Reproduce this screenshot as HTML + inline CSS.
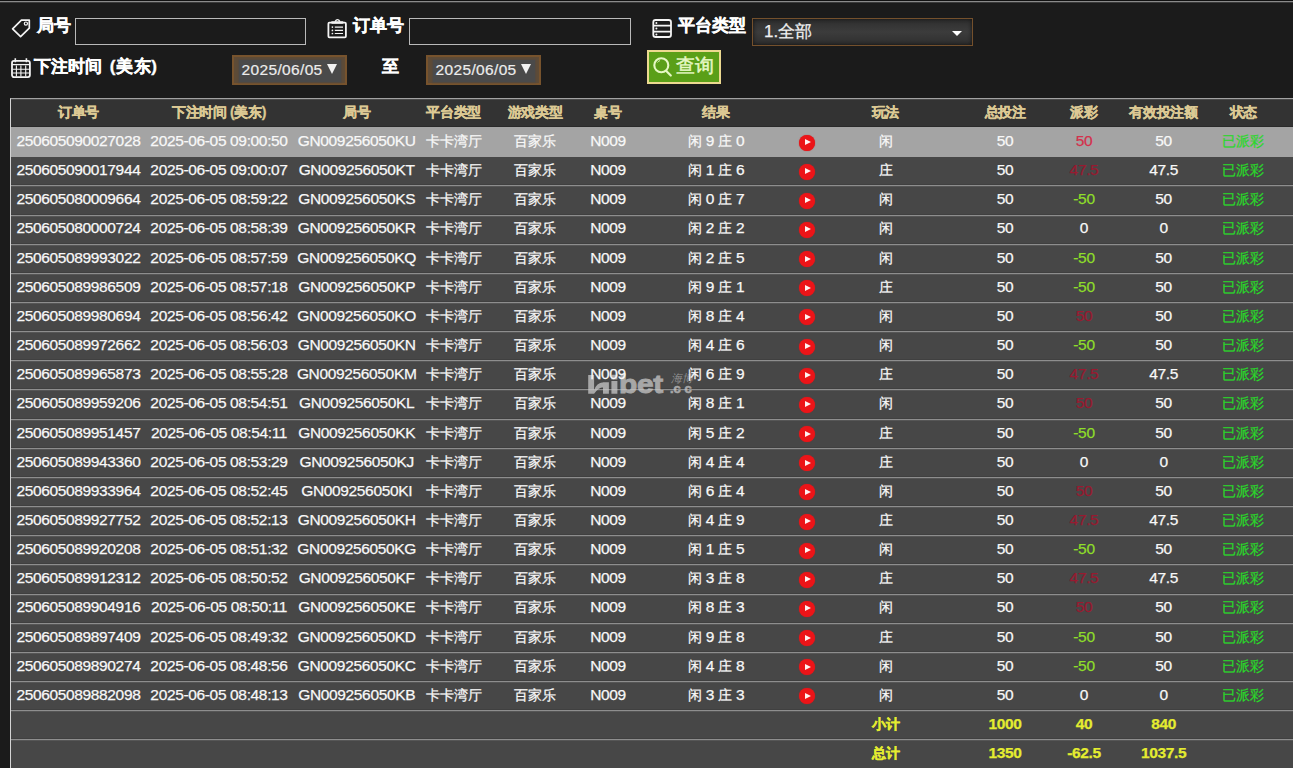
<!DOCTYPE html><html><head><meta charset="utf-8"><title>records</title><style>
*{margin:0;padding:0;box-sizing:border-box}
html,body{width:1293px;height:768px;overflow:hidden;background:#1b1b1b;font-family:"Liberation Sans",sans-serif;color:#fff}
#top{position:absolute;left:0;top:0;width:1293px;height:3px;background:linear-gradient(#111 0,#111 1px,#8a8a8a 1px,#8a8a8a 2px,#3a3a3a 2px)}
.lbl{position:absolute;font-weight:bold;font-size:17px;color:#fff;line-height:20px;white-space:nowrap;-webkit-text-stroke:.35px #fff}
.inp{position:absolute;border:1px solid #b9b9b9;background:#1b1b1b}
.date{position:absolute;border:2px solid #77532d;background:#5e4b37}
.dinner{position:absolute;left:5px;top:2.5px;right:4.5px;bottom:1.5px;background:#4a4a4a;box-shadow:0 0 1.5px 1px #534a40}
.dtxt{position:absolute;left:7.5px;top:2.5px;-webkit-text-stroke:.2px #ececec;font-size:15.5px;letter-spacing:.35px;line-height:20px;color:#ececec;white-space:nowrap}
.dtri{position:absolute;left:93px;top:7px;border-top:10px solid #f2f2f2;border-left:5.4px solid transparent;border-right:5.4px solid transparent}
.sel{position:absolute;border:1px solid #74502c;background:linear-gradient(#2e2e2e,#3c3c3c 50%,#2e2e2e);box-shadow:inset 0 0 4px #111;color:#f0f0f0;font-size:17px;white-space:nowrap}
.btn{position:absolute;border:2px solid #ecd990;background:#5a9f18}
svg{position:absolute;overflow:visible}
#tbl{position:absolute;left:10px;top:98px;width:1300px;height:680px;background:#474747;border-left:1px solid #d4d4d4;border-top:1px solid #a2a2a2}
#hdr{position:absolute;left:11px;top:99px;width:1290px;height:28px;background:#333;border-top:1px solid #4a4a4a;border-bottom:1px solid #2a2a2a}
.row{position:absolute;left:11px;width:1290px}
.sep{position:absolute;left:11px;width:1290px;height:3px;background:linear-gradient(#404040 0,#404040 1px,#8e8e8e 1px,#8e8e8e 2px,#565656 2px)}
.c{position:absolute;width:200px;text-align:center;white-space:nowrap;font-size:15.5px;letter-spacing:-0.35px;line-height:18px;color:#f8f8f8;-webkit-text-stroke:.25px currentColor}
.c i{font-style:normal;font-size:14.2px;letter-spacing:0}
.h{font-weight:bold;color:#dcc994;font-size:14px;-webkit-text-stroke:.3px currentColor}
.r{color:#d4304c}
.dr{color:#981a30}
.g{color:#8ede2a}
.st{color:#2ad82a}
.y{color:#e4ec30;font-weight:bold}
.play{position:absolute;width:16px;height:16px;border-radius:50%;background:#ec1418;box-shadow:0 0 1px #c02020}
.play:after{content:"";position:absolute;left:5.5px;top:4.6px;border-left:6px solid #fff2f2;border-top:3.7px solid transparent;border-bottom:3.7px solid transparent}
</style></head><body>
<div id="top"></div>
<svg style="left:6px;top:14px" width="32" height="28" viewBox="0 0 32 28"><path d="M6.6 14.9 L15.4 6.2 L23.3 6.2 L23.3 14.2 L14.6 22.6 Z" fill="none" stroke="#f4f4f4" stroke-width="1.7" stroke-linejoin="round"/><circle cx="19.9" cy="9.6" r="1.6" fill="none" stroke="#f4f4f4" stroke-width="1.2"/></svg>
<div class="lbl" style="left:36.5px;top:16.2px">局号</div>
<div class="inp" style="left:75px;top:18px;width:231px;height:27px"></div>
<svg style="left:320px;top:14px" width="32" height="28" viewBox="0 0 32 28"><rect x="8.4" y="8.7" width="17.5" height="14.6" rx="1" fill="none" stroke="#f4f4f4" stroke-width="1.8"/><rect x="11" y="7.3" width="12.6" height="2.4" rx="1.1" fill="#f4f4f4"/><path d="M15 7.6 Q17.5 3.6 20 7.6" fill="none" stroke="#f4f4f4" stroke-width="1.4"/><circle cx="12.4" cy="13.1" r=".85" fill="#f4f4f4"/><circle cx="12.4" cy="16.4" r=".85" fill="#f4f4f4"/><circle cx="12.4" cy="19.5" r=".85" fill="#f4f4f4"/><path d="M14.8 13.1H23M14.8 16.4H23M14.8 19.5H23" stroke="#f4f4f4" stroke-width="1.1"/></svg>
<div class="lbl" style="left:352.5px;top:16.2px">订单号</div>
<div class="inp" style="left:409px;top:18px;width:222px;height:27px"></div>
<svg style="left:646px;top:14px" width="32" height="28" viewBox="0 0 32 28"><rect x="7.3" y="6" width="17.7" height="17" rx="2.3" fill="none" stroke="#f4f4f4" stroke-width="1.8"/><path d="M7.3 11.7H25M7.3 17.7H25" stroke="#f4f4f4" stroke-width="1.7"/><circle cx="10.4" cy="8.9" r="1" fill="#f4f4f4"/><circle cx="10.4" cy="14.6" r="1" fill="#f4f4f4"/><circle cx="10.4" cy="20.4" r="1" fill="#f4f4f4"/></svg>
<div class="lbl" style="left:677.5px;top:16.2px">平台类型</div>
<div class="sel" style="left:752px;top:18px;width:221px;height:28px"><span style="position:absolute;left:11px;top:0.5px;-webkit-text-stroke:.25px #f4f4f4">1.全部</span><span style="position:absolute;left:199px;top:12px;border-top:5px solid #fff;border-left:5px solid transparent;border-right:5px solid transparent"></span></div>
<svg style="left:6px;top:54px" width="32" height="28" viewBox="0 0 32 28"><rect x="6" y="6.9" width="17.9" height="16.2" rx="2" fill="none" stroke="#f4f4f4" stroke-width="1.8"/><path d="M9.3 4.3v4M20.4 4.3v4" stroke="#f4f4f4" stroke-width="1.6"/><path d="M6 10.6H23.9" stroke="#f4f4f4" stroke-width="1.3"/><path d="M10.4 11.5V22.4M14.9 11.5V22.4M19.7 11.5V22.4M6.8 15.3H23M6.8 19H23" stroke="#f4f4f4" stroke-width="1.1"/></svg>
<div class="lbl" style="left:34px;top:57px;word-spacing:3px">下注时间 <span style="letter-spacing:.6px">(美东)</span></div>
<div class="date" style="left:232px;top:55px;width:115px;height:30px"><div class="dinner"></div><span class="dtxt">2025/06/05</span><span class="dtri"></span></div>
<div class="lbl" style="left:382px;top:56.5px">至</div>
<div class="date" style="left:426px;top:55px;width:115px;height:30px"><div class="dinner"></div><span class="dtxt">2025/06/05</span><span class="dtri"></span></div>
<div class="btn" style="left:647px;top:50px;width:74px;height:34px"></div><svg style="left:640px;top:46px" width="86" height="42" viewBox="0 0 86 42"><circle cx="21.3" cy="19.3" r="7" fill="none" stroke="#e6f8c4" stroke-width="2.1"/><path d="M26.3 25L30.8 29.5" stroke="#e6f8c4" stroke-width="2.2" stroke-linecap="round"/><path d="M17.5 16.5Q18.5 15 20 14.6" fill="none" stroke="#e6f8c4" stroke-width=".9"/></svg><div style="position:absolute;left:675.5px;top:54px;font-size:19px;line-height:24px;color:#e6f8c4;white-space:nowrap;-webkit-text-stroke:.5px #e6f8c4">查询</div>
<div id="tbl"></div><div id="hdr"></div>
<div class="c h" style="left:-21.6px;top:103px">订单号</div>
<div class="c h" style="left:119.0px;top:103px">下注时间 (美东)</div>
<div class="c h" style="left:256.7px;top:103px">局号</div>
<div class="c h" style="left:353.7px;top:103px">平台类型</div>
<div class="c h" style="left:435.0px;top:103px">游戏类型</div>
<div class="c h" style="left:508.0px;top:103px">桌号</div>
<div class="c h" style="left:616.0px;top:103px">结果</div>
<div class="c h" style="left:785.5px;top:103px">玩法</div>
<div class="c h" style="left:905.0px;top:103px">总投注</div>
<div class="c h" style="left:984.0px;top:103px">派彩</div>
<div class="c h" style="left:1063.6px;top:103px">有效投注额</div>
<div class="c h" style="left:1143.3px;top:103px">状态</div>
<div class="row" style="top:127.0px;height:30px;background:#a4a4a4"></div>
<div class="sep" style="top:184px"></div>
<div class="sep" style="top:214px"></div>
<div class="sep" style="top:243px"></div>
<div class="sep" style="top:272px"></div>
<div class="sep" style="top:301px"></div>
<div class="sep" style="top:330px"></div>
<div class="sep" style="top:359px"></div>
<div class="sep" style="top:388px"></div>
<div class="sep" style="top:418px"></div>
<div class="sep" style="top:447px"></div>
<div class="sep" style="top:476px"></div>
<div class="sep" style="top:505px"></div>
<div class="sep" style="top:534px"></div>
<div class="sep" style="top:563px"></div>
<div class="sep" style="top:593px"></div>
<div class="sep" style="top:622px"></div>
<div class="sep" style="top:651px"></div>
<div class="sep" style="top:680px"></div>
<div class="sep" style="top:709px"></div>
<div class="sep" style="top:738px"></div>
<div style="position:absolute;left:0;top:0;width:1293px;height:768px;opacity:.74">
<svg style="left:0;top:0" width="1293" height="768" viewBox="0 0 1293 768"><path fill="#c9c9c9" d="M588.2 375.1h5.9v18.6h-5.9z M603 382.3h5.9v11.4H603z M611.4 381h6v12.7h-6z M611.4 374.8h6v4.6h-6z M594 390.5 Q596.5 382.6 603.2 382.3 L603.2 387.3 Q598.5 387.6 594.1 393.7 Z"/></svg>
<div style="position:absolute;left:618.6px;top:368.6px;font-weight:bold;font-size:25.8px;line-height:30px;color:#c9c9c9;-webkit-text-stroke:.9px #c9c9c9;transform:scaleX(1.16);transform-origin:0 0;white-space:nowrap;letter-spacing:-.3px">bet</div>
<div style="position:absolute;left:670px;top:381px;font-weight:bold;font-size:13px;line-height:16px;color:#c9c9c9;-webkit-text-stroke:.6px #c9c9c9;letter-spacing:0px;white-space:nowrap">.c c</div>
<div style="position:absolute;left:671px;top:371px;font-size:11px;line-height:14px;color:#aaa;font-style:italic;white-space:nowrap">海博</div>
</div>
<div class="c " style="left:-21.6px;top:132.0px">250605090027028</div>
<div class="c " style="left:119.0px;top:132.0px">2025-06-05 09:00:50</div>
<div class="c " style="left:256.7px;top:132.0px">GN009256050KU</div>
<div class="c " style="left:353.7px;top:132.0px"><i>卡卡湾厅</i></div>
<div class="c " style="left:435.0px;top:132.0px"><i>百家乐</i></div>
<div class="c " style="left:508.0px;top:132.0px">N009</div>
<div class="c " style="left:616.0px;top:132.0px"><i>闲</i> 9 <i>庄</i> 0</div>
<div class="c " style="left:785.5px;top:132.0px"><i>闲</i></div>
<div class="c " style="left:905.0px;top:132.0px">50</div>
<div class="c r" style="left:984.0px;top:132.0px">50</div>
<div class="c " style="left:1063.6px;top:132.0px">50</div>
<div class="c st" style="left:1143.3px;top:132.0px"><i>已派彩</i></div>
<div class="play" style="left:799px;top:134.5px"></div>
<div class="c " style="left:-21.6px;top:161.2px">250605090017944</div>
<div class="c " style="left:119.0px;top:161.2px">2025-06-05 09:00:07</div>
<div class="c " style="left:256.7px;top:161.2px">GN009256050KT</div>
<div class="c " style="left:353.7px;top:161.2px"><i>卡卡湾厅</i></div>
<div class="c " style="left:435.0px;top:161.2px"><i>百家乐</i></div>
<div class="c " style="left:508.0px;top:161.2px">N009</div>
<div class="c " style="left:616.0px;top:161.2px"><i>闲</i> 1 <i>庄</i> 6</div>
<div class="c " style="left:785.5px;top:161.2px"><i>庄</i></div>
<div class="c " style="left:905.0px;top:161.2px">50</div>
<div class="c dr" style="left:984.0px;top:161.2px">47.5</div>
<div class="c " style="left:1063.6px;top:161.2px">47.5</div>
<div class="c st" style="left:1143.3px;top:161.2px"><i>已派彩</i></div>
<div class="play" style="left:799px;top:163.7px"></div>
<div class="c " style="left:-21.6px;top:190.3px">250605080009664</div>
<div class="c " style="left:119.0px;top:190.3px">2025-06-05 08:59:22</div>
<div class="c " style="left:256.7px;top:190.3px">GN009256050KS</div>
<div class="c " style="left:353.7px;top:190.3px"><i>卡卡湾厅</i></div>
<div class="c " style="left:435.0px;top:190.3px"><i>百家乐</i></div>
<div class="c " style="left:508.0px;top:190.3px">N009</div>
<div class="c " style="left:616.0px;top:190.3px"><i>闲</i> 0 <i>庄</i> 7</div>
<div class="c " style="left:785.5px;top:190.3px"><i>闲</i></div>
<div class="c " style="left:905.0px;top:190.3px">50</div>
<div class="c g" style="left:984.0px;top:190.3px">-50</div>
<div class="c " style="left:1063.6px;top:190.3px">50</div>
<div class="c st" style="left:1143.3px;top:190.3px"><i>已派彩</i></div>
<div class="play" style="left:799px;top:192.8px"></div>
<div class="c " style="left:-21.6px;top:219.4px">250605080000724</div>
<div class="c " style="left:119.0px;top:219.4px">2025-06-05 08:58:39</div>
<div class="c " style="left:256.7px;top:219.4px">GN009256050KR</div>
<div class="c " style="left:353.7px;top:219.4px"><i>卡卡湾厅</i></div>
<div class="c " style="left:435.0px;top:219.4px"><i>百家乐</i></div>
<div class="c " style="left:508.0px;top:219.4px">N009</div>
<div class="c " style="left:616.0px;top:219.4px"><i>闲</i> 2 <i>庄</i> 2</div>
<div class="c " style="left:785.5px;top:219.4px"><i>闲</i></div>
<div class="c " style="left:905.0px;top:219.4px">50</div>
<div class="c " style="left:984.0px;top:219.4px">0</div>
<div class="c " style="left:1063.6px;top:219.4px">0</div>
<div class="c st" style="left:1143.3px;top:219.4px"><i>已派彩</i></div>
<div class="play" style="left:799px;top:221.9px"></div>
<div class="c " style="left:-21.6px;top:248.6px">250605089993022</div>
<div class="c " style="left:119.0px;top:248.6px">2025-06-05 08:57:59</div>
<div class="c " style="left:256.7px;top:248.6px">GN009256050KQ</div>
<div class="c " style="left:353.7px;top:248.6px"><i>卡卡湾厅</i></div>
<div class="c " style="left:435.0px;top:248.6px"><i>百家乐</i></div>
<div class="c " style="left:508.0px;top:248.6px">N009</div>
<div class="c " style="left:616.0px;top:248.6px"><i>闲</i> 2 <i>庄</i> 5</div>
<div class="c " style="left:785.5px;top:248.6px"><i>闲</i></div>
<div class="c " style="left:905.0px;top:248.6px">50</div>
<div class="c g" style="left:984.0px;top:248.6px">-50</div>
<div class="c " style="left:1063.6px;top:248.6px">50</div>
<div class="c st" style="left:1143.3px;top:248.6px"><i>已派彩</i></div>
<div class="play" style="left:799px;top:251.1px"></div>
<div class="c " style="left:-21.6px;top:277.8px">250605089986509</div>
<div class="c " style="left:119.0px;top:277.8px">2025-06-05 08:57:18</div>
<div class="c " style="left:256.7px;top:277.8px">GN009256050KP</div>
<div class="c " style="left:353.7px;top:277.8px"><i>卡卡湾厅</i></div>
<div class="c " style="left:435.0px;top:277.8px"><i>百家乐</i></div>
<div class="c " style="left:508.0px;top:277.8px">N009</div>
<div class="c " style="left:616.0px;top:277.8px"><i>闲</i> 9 <i>庄</i> 1</div>
<div class="c " style="left:785.5px;top:277.8px"><i>庄</i></div>
<div class="c " style="left:905.0px;top:277.8px">50</div>
<div class="c g" style="left:984.0px;top:277.8px">-50</div>
<div class="c " style="left:1063.6px;top:277.8px">50</div>
<div class="c st" style="left:1143.3px;top:277.8px"><i>已派彩</i></div>
<div class="play" style="left:799px;top:280.2px"></div>
<div class="c " style="left:-21.6px;top:306.9px">250605089980694</div>
<div class="c " style="left:119.0px;top:306.9px">2025-06-05 08:56:42</div>
<div class="c " style="left:256.7px;top:306.9px">GN009256050KO</div>
<div class="c " style="left:353.7px;top:306.9px"><i>卡卡湾厅</i></div>
<div class="c " style="left:435.0px;top:306.9px"><i>百家乐</i></div>
<div class="c " style="left:508.0px;top:306.9px">N009</div>
<div class="c " style="left:616.0px;top:306.9px"><i>闲</i> 8 <i>庄</i> 4</div>
<div class="c " style="left:785.5px;top:306.9px"><i>闲</i></div>
<div class="c " style="left:905.0px;top:306.9px">50</div>
<div class="c dr" style="left:984.0px;top:306.9px">50</div>
<div class="c " style="left:1063.6px;top:306.9px">50</div>
<div class="c st" style="left:1143.3px;top:306.9px"><i>已派彩</i></div>
<div class="play" style="left:799px;top:309.4px"></div>
<div class="c " style="left:-21.6px;top:336.0px">250605089972662</div>
<div class="c " style="left:119.0px;top:336.0px">2025-06-05 08:56:03</div>
<div class="c " style="left:256.7px;top:336.0px">GN009256050KN</div>
<div class="c " style="left:353.7px;top:336.0px"><i>卡卡湾厅</i></div>
<div class="c " style="left:435.0px;top:336.0px"><i>百家乐</i></div>
<div class="c " style="left:508.0px;top:336.0px">N009</div>
<div class="c " style="left:616.0px;top:336.0px"><i>闲</i> 4 <i>庄</i> 6</div>
<div class="c " style="left:785.5px;top:336.0px"><i>闲</i></div>
<div class="c " style="left:905.0px;top:336.0px">50</div>
<div class="c g" style="left:984.0px;top:336.0px">-50</div>
<div class="c " style="left:1063.6px;top:336.0px">50</div>
<div class="c st" style="left:1143.3px;top:336.0px"><i>已派彩</i></div>
<div class="play" style="left:799px;top:338.5px"></div>
<div class="c " style="left:-21.6px;top:365.2px">250605089965873</div>
<div class="c " style="left:119.0px;top:365.2px">2025-06-05 08:55:28</div>
<div class="c " style="left:256.7px;top:365.2px">GN009256050KM</div>
<div class="c " style="left:353.7px;top:365.2px"><i>卡卡湾厅</i></div>
<div class="c " style="left:435.0px;top:365.2px"><i>百家乐</i></div>
<div class="c " style="left:508.0px;top:365.2px">N009</div>
<div class="c " style="left:616.0px;top:365.2px"><i>闲</i> 6 <i>庄</i> 9</div>
<div class="c " style="left:785.5px;top:365.2px"><i>庄</i></div>
<div class="c " style="left:905.0px;top:365.2px">50</div>
<div class="c dr" style="left:984.0px;top:365.2px">47.5</div>
<div class="c " style="left:1063.6px;top:365.2px">47.5</div>
<div class="c st" style="left:1143.3px;top:365.2px"><i>已派彩</i></div>
<div class="play" style="left:799px;top:367.7px"></div>
<div class="c " style="left:-21.6px;top:394.3px">250605089959206</div>
<div class="c " style="left:119.0px;top:394.3px">2025-06-05 08:54:51</div>
<div class="c " style="left:256.7px;top:394.3px">GN009256050KL</div>
<div class="c " style="left:353.7px;top:394.3px"><i>卡卡湾厅</i></div>
<div class="c " style="left:435.0px;top:394.3px"><i>百家乐</i></div>
<div class="c " style="left:508.0px;top:394.3px">N009</div>
<div class="c " style="left:616.0px;top:394.3px"><i>闲</i> 8 <i>庄</i> 1</div>
<div class="c " style="left:785.5px;top:394.3px"><i>闲</i></div>
<div class="c " style="left:905.0px;top:394.3px">50</div>
<div class="c dr" style="left:984.0px;top:394.3px">50</div>
<div class="c " style="left:1063.6px;top:394.3px">50</div>
<div class="c st" style="left:1143.3px;top:394.3px"><i>已派彩</i></div>
<div class="play" style="left:799px;top:396.8px"></div>
<div class="c " style="left:-21.6px;top:423.5px">250605089951457</div>
<div class="c " style="left:119.0px;top:423.5px">2025-06-05 08:54:11</div>
<div class="c " style="left:256.7px;top:423.5px">GN009256050KK</div>
<div class="c " style="left:353.7px;top:423.5px"><i>卡卡湾厅</i></div>
<div class="c " style="left:435.0px;top:423.5px"><i>百家乐</i></div>
<div class="c " style="left:508.0px;top:423.5px">N009</div>
<div class="c " style="left:616.0px;top:423.5px"><i>闲</i> 5 <i>庄</i> 2</div>
<div class="c " style="left:785.5px;top:423.5px"><i>庄</i></div>
<div class="c " style="left:905.0px;top:423.5px">50</div>
<div class="c g" style="left:984.0px;top:423.5px">-50</div>
<div class="c " style="left:1063.6px;top:423.5px">50</div>
<div class="c st" style="left:1143.3px;top:423.5px"><i>已派彩</i></div>
<div class="play" style="left:799px;top:426.0px"></div>
<div class="c " style="left:-21.6px;top:452.6px">250605089943360</div>
<div class="c " style="left:119.0px;top:452.6px">2025-06-05 08:53:29</div>
<div class="c " style="left:256.7px;top:452.6px">GN009256050KJ</div>
<div class="c " style="left:353.7px;top:452.6px"><i>卡卡湾厅</i></div>
<div class="c " style="left:435.0px;top:452.6px"><i>百家乐</i></div>
<div class="c " style="left:508.0px;top:452.6px">N009</div>
<div class="c " style="left:616.0px;top:452.6px"><i>闲</i> 4 <i>庄</i> 4</div>
<div class="c " style="left:785.5px;top:452.6px"><i>庄</i></div>
<div class="c " style="left:905.0px;top:452.6px">50</div>
<div class="c " style="left:984.0px;top:452.6px">0</div>
<div class="c " style="left:1063.6px;top:452.6px">0</div>
<div class="c st" style="left:1143.3px;top:452.6px"><i>已派彩</i></div>
<div class="play" style="left:799px;top:455.1px"></div>
<div class="c " style="left:-21.6px;top:481.8px">250605089933964</div>
<div class="c " style="left:119.0px;top:481.8px">2025-06-05 08:52:45</div>
<div class="c " style="left:256.7px;top:481.8px">GN009256050KI</div>
<div class="c " style="left:353.7px;top:481.8px"><i>卡卡湾厅</i></div>
<div class="c " style="left:435.0px;top:481.8px"><i>百家乐</i></div>
<div class="c " style="left:508.0px;top:481.8px">N009</div>
<div class="c " style="left:616.0px;top:481.8px"><i>闲</i> 6 <i>庄</i> 4</div>
<div class="c " style="left:785.5px;top:481.8px"><i>闲</i></div>
<div class="c " style="left:905.0px;top:481.8px">50</div>
<div class="c dr" style="left:984.0px;top:481.8px">50</div>
<div class="c " style="left:1063.6px;top:481.8px">50</div>
<div class="c st" style="left:1143.3px;top:481.8px"><i>已派彩</i></div>
<div class="play" style="left:799px;top:484.3px"></div>
<div class="c " style="left:-21.6px;top:510.9px">250605089927752</div>
<div class="c " style="left:119.0px;top:510.9px">2025-06-05 08:52:13</div>
<div class="c " style="left:256.7px;top:510.9px">GN009256050KH</div>
<div class="c " style="left:353.7px;top:510.9px"><i>卡卡湾厅</i></div>
<div class="c " style="left:435.0px;top:510.9px"><i>百家乐</i></div>
<div class="c " style="left:508.0px;top:510.9px">N009</div>
<div class="c " style="left:616.0px;top:510.9px"><i>闲</i> 4 <i>庄</i> 9</div>
<div class="c " style="left:785.5px;top:510.9px"><i>庄</i></div>
<div class="c " style="left:905.0px;top:510.9px">50</div>
<div class="c dr" style="left:984.0px;top:510.9px">47.5</div>
<div class="c " style="left:1063.6px;top:510.9px">47.5</div>
<div class="c st" style="left:1143.3px;top:510.9px"><i>已派彩</i></div>
<div class="play" style="left:799px;top:513.5px"></div>
<div class="c " style="left:-21.6px;top:540.1px">250605089920208</div>
<div class="c " style="left:119.0px;top:540.1px">2025-06-05 08:51:32</div>
<div class="c " style="left:256.7px;top:540.1px">GN009256050KG</div>
<div class="c " style="left:353.7px;top:540.1px"><i>卡卡湾厅</i></div>
<div class="c " style="left:435.0px;top:540.1px"><i>百家乐</i></div>
<div class="c " style="left:508.0px;top:540.1px">N009</div>
<div class="c " style="left:616.0px;top:540.1px"><i>闲</i> 1 <i>庄</i> 5</div>
<div class="c " style="left:785.5px;top:540.1px"><i>闲</i></div>
<div class="c " style="left:905.0px;top:540.1px">50</div>
<div class="c g" style="left:984.0px;top:540.1px">-50</div>
<div class="c " style="left:1063.6px;top:540.1px">50</div>
<div class="c st" style="left:1143.3px;top:540.1px"><i>已派彩</i></div>
<div class="play" style="left:799px;top:542.6px"></div>
<div class="c " style="left:-21.6px;top:569.2px">250605089912312</div>
<div class="c " style="left:119.0px;top:569.2px">2025-06-05 08:50:52</div>
<div class="c " style="left:256.7px;top:569.2px">GN009256050KF</div>
<div class="c " style="left:353.7px;top:569.2px"><i>卡卡湾厅</i></div>
<div class="c " style="left:435.0px;top:569.2px"><i>百家乐</i></div>
<div class="c " style="left:508.0px;top:569.2px">N009</div>
<div class="c " style="left:616.0px;top:569.2px"><i>闲</i> 3 <i>庄</i> 8</div>
<div class="c " style="left:785.5px;top:569.2px"><i>庄</i></div>
<div class="c " style="left:905.0px;top:569.2px">50</div>
<div class="c dr" style="left:984.0px;top:569.2px">47.5</div>
<div class="c " style="left:1063.6px;top:569.2px">47.5</div>
<div class="c st" style="left:1143.3px;top:569.2px"><i>已派彩</i></div>
<div class="play" style="left:799px;top:571.8px"></div>
<div class="c " style="left:-21.6px;top:598.4px">250605089904916</div>
<div class="c " style="left:119.0px;top:598.4px">2025-06-05 08:50:11</div>
<div class="c " style="left:256.7px;top:598.4px">GN009256050KE</div>
<div class="c " style="left:353.7px;top:598.4px"><i>卡卡湾厅</i></div>
<div class="c " style="left:435.0px;top:598.4px"><i>百家乐</i></div>
<div class="c " style="left:508.0px;top:598.4px">N009</div>
<div class="c " style="left:616.0px;top:598.4px"><i>闲</i> 8 <i>庄</i> 3</div>
<div class="c " style="left:785.5px;top:598.4px"><i>闲</i></div>
<div class="c " style="left:905.0px;top:598.4px">50</div>
<div class="c dr" style="left:984.0px;top:598.4px">50</div>
<div class="c " style="left:1063.6px;top:598.4px">50</div>
<div class="c st" style="left:1143.3px;top:598.4px"><i>已派彩</i></div>
<div class="play" style="left:799px;top:600.9px"></div>
<div class="c " style="left:-21.6px;top:627.5px">250605089897409</div>
<div class="c " style="left:119.0px;top:627.5px">2025-06-05 08:49:32</div>
<div class="c " style="left:256.7px;top:627.5px">GN009256050KD</div>
<div class="c " style="left:353.7px;top:627.5px"><i>卡卡湾厅</i></div>
<div class="c " style="left:435.0px;top:627.5px"><i>百家乐</i></div>
<div class="c " style="left:508.0px;top:627.5px">N009</div>
<div class="c " style="left:616.0px;top:627.5px"><i>闲</i> 9 <i>庄</i> 8</div>
<div class="c " style="left:785.5px;top:627.5px"><i>庄</i></div>
<div class="c " style="left:905.0px;top:627.5px">50</div>
<div class="c g" style="left:984.0px;top:627.5px">-50</div>
<div class="c " style="left:1063.6px;top:627.5px">50</div>
<div class="c st" style="left:1143.3px;top:627.5px"><i>已派彩</i></div>
<div class="play" style="left:799px;top:630.0px"></div>
<div class="c " style="left:-21.6px;top:656.7px">250605089890274</div>
<div class="c " style="left:119.0px;top:656.7px">2025-06-05 08:48:56</div>
<div class="c " style="left:256.7px;top:656.7px">GN009256050KC</div>
<div class="c " style="left:353.7px;top:656.7px"><i>卡卡湾厅</i></div>
<div class="c " style="left:435.0px;top:656.7px"><i>百家乐</i></div>
<div class="c " style="left:508.0px;top:656.7px">N009</div>
<div class="c " style="left:616.0px;top:656.7px"><i>闲</i> 4 <i>庄</i> 8</div>
<div class="c " style="left:785.5px;top:656.7px"><i>闲</i></div>
<div class="c " style="left:905.0px;top:656.7px">50</div>
<div class="c g" style="left:984.0px;top:656.7px">-50</div>
<div class="c " style="left:1063.6px;top:656.7px">50</div>
<div class="c st" style="left:1143.3px;top:656.7px"><i>已派彩</i></div>
<div class="play" style="left:799px;top:659.2px"></div>
<div class="c " style="left:-21.6px;top:685.9px">250605089882098</div>
<div class="c " style="left:119.0px;top:685.9px">2025-06-05 08:48:13</div>
<div class="c " style="left:256.7px;top:685.9px">GN009256050KB</div>
<div class="c " style="left:353.7px;top:685.9px"><i>卡卡湾厅</i></div>
<div class="c " style="left:435.0px;top:685.9px"><i>百家乐</i></div>
<div class="c " style="left:508.0px;top:685.9px">N009</div>
<div class="c " style="left:616.0px;top:685.9px"><i>闲</i> 3 <i>庄</i> 3</div>
<div class="c " style="left:785.5px;top:685.9px"><i>闲</i></div>
<div class="c " style="left:905.0px;top:685.9px">50</div>
<div class="c " style="left:984.0px;top:685.9px">0</div>
<div class="c " style="left:1063.6px;top:685.9px">0</div>
<div class="c st" style="left:1143.3px;top:685.9px"><i>已派彩</i></div>
<div class="play" style="left:799px;top:688.4px"></div>
<div class="c y" style="left:785.5px;top:715.0px"><i>小计</i></div>
<div class="c y" style="left:905.0px;top:715.0px">1000</div>
<div class="c y" style="left:984.0px;top:715.0px">40</div>
<div class="c y" style="left:1063.6px;top:715.0px">840</div>
<div class="c y" style="left:785.5px;top:744.1px"><i>总计</i></div>
<div class="c y" style="left:905.0px;top:744.1px">1350</div>
<div class="c y" style="left:984.0px;top:744.1px">-62.5</div>
<div class="c y" style="left:1063.6px;top:744.1px">1037.5</div>
</body></html>
